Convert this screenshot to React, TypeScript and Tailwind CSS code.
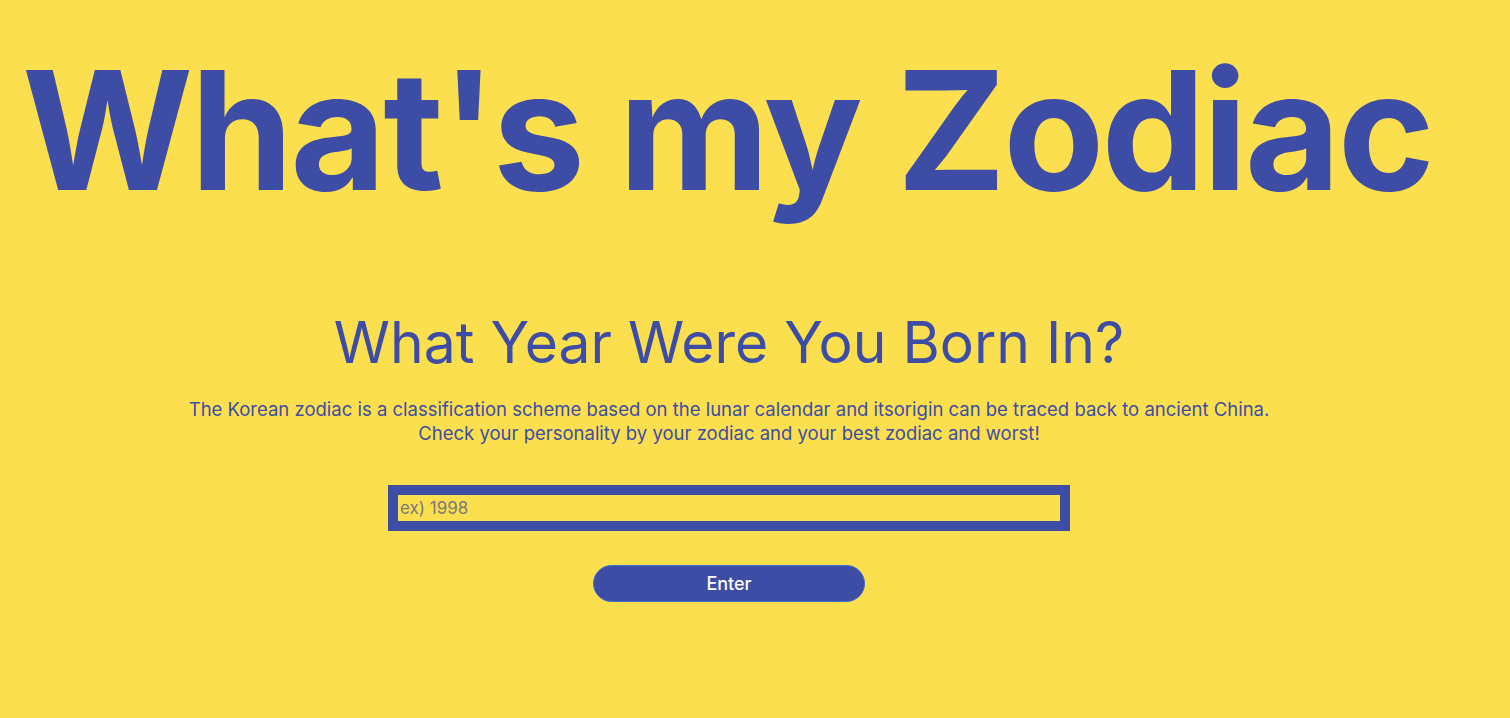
import React from "react";

export default function App() {
  return (
    <div className="min-h-[718px] w-full bg-[#fbdf4e] overflow-hidden" style={{ fontFamily: "Inter, 'Noto Sans', sans-serif" }}>
      <div className="w-[1458px]">
        <h1 className="pl-[22px] pt-[48px] text-[165px] leading-[1] font-bold text-[#3d4da5] tracking-[-2.8px] whitespace-nowrap">
          What's my Zodiac
        </h1>
        <div className="flex flex-col items-center mt-[101px]">
          <h2 className="text-[57px] leading-[1] text-[#3d4da5] font-normal">What Year Were You Born In?</h2>
          <p className="mt-[26px] text-center text-[18.5px] leading-[24px] text-[#3d4da5]">
            The Korean zodiac is a classification scheme based on the lunar calendar and itsorigin can be traced back to ancient China.
            <br />
            Check your personality by your zodiac and your best zodiac and worst!
          </p>
          <input
            placeholder="ex) 1998"
            className="mt-[40px] w-[682px] h-[46px] border-[10px] border-[#3d4da5] bg-transparent px-[2px] text-[17px] text-[#3d4da5] placeholder:text-[#7a7a7a] outline-none"
          />
          <button className="mt-[34px] w-[272px] h-[37px] rounded-full bg-[#3d4da5] border border-[#3f6fd0] text-white text-[18px] font-medium">
            Enter
          </button>
        </div>
      </div>
    </div>
  );
}
